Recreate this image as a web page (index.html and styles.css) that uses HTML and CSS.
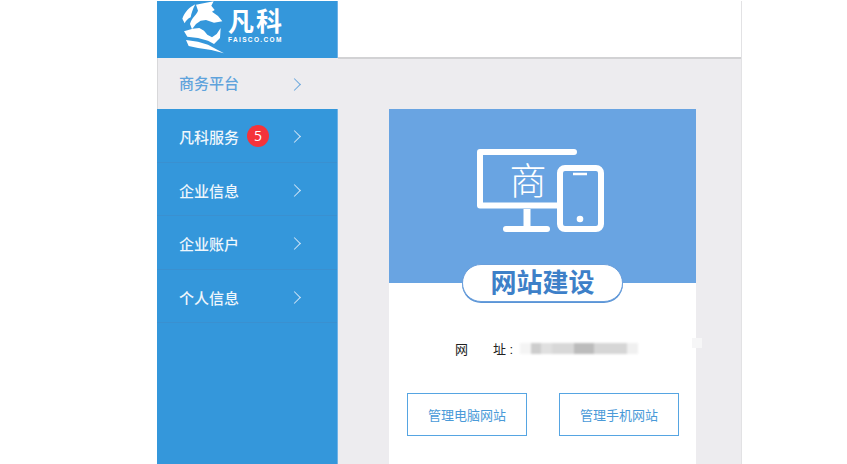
FILE: index.html
```html
<!DOCTYPE html>
<html lang="zh">
<head>
<meta charset="utf-8">
<title>商务平台</title>
<link rel="stylesheet" href="styles.css">
</head>
<body>
<div class="app">
  <aside class="sidebar">
    <div class="logo">
      <svg class="logo-mark" viewBox="0 3 150 171" width="50" height="57">
        <path fill="#fff" d="M13 56 C20 36 34 22 52 13 C44 28 40 40 38 52 C30 56 24 62 20 70 Z"/>
        <path fill="#fff" d="M54 14 L80 9 L107 4 L100 17 L110 30 L102 35 L120 48 L133 64 L108 68 L84 60 L68 62 L54 72 L42 88 L36 72 C40 54 56 44 60 32 Z"/>
        <path fill="#fff" d="M18 94 L44 86 L64 84 L78 92 L88 104 L102 112 L116 102 L128 84 L126 114 L108 132 L90 122 L60 114 L28 110 Z"/>
        <path fill="#fff" d="M24 120 L60 125 L90 134 L115 148 L138 160 L100 150 L60 144 L32 138 Z"/>
      </svg>
      <div class="logo-text">
        <div class="logo-cn">凡科</div>
        <div class="logo-en">FAISCO.COM</div>
      </div>
    </div>
    <nav class="menu">
      <a class="menu-item menu-item-active"><span class="menu-label">商务平台</span><span class="chevron"></span></a>
      <a class="menu-item"><span class="menu-label">凡科服务</span><span class="badge">5</span><span class="chevron"></span></a>
      <a class="menu-item"><span class="menu-label">企业信息</span><span class="chevron"></span></a>
      <a class="menu-item"><span class="menu-label">企业账户</span><span class="chevron"></span></a>
      <a class="menu-item"><span class="menu-label">个人信息</span><span class="chevron"></span></a>
    </nav>
  </aside>
  <div class="main">
    <header class="topbar"></header>
    <main class="content">
      <section class="card">
        <div class="card-hero">
          <svg class="device" viewBox="0 0 127 83" width="127" height="83">
            <path fill="none" stroke="#fff" stroke-width="6" stroke-linecap="round" stroke-linejoin="round" d="M97 3 H3 V56.500 H81"/>
            <path fill="none" stroke="#fff" stroke-width="7" d="M50 60 V78"/>
            <path fill="none" stroke="#fff" stroke-width="6" stroke-linecap="round" d="M29 80 H70"/>
            <rect x="83" y="19" width="41" height="61" rx="5" fill="none" stroke="#fff" stroke-width="6"/>
            <path fill="none" stroke="#fff" stroke-width="2.500" d="M96 25 H110"/>
            <circle cx="103" cy="70" r="3.300" fill="#fff"/>
            <text class="device-text" x="51" y="46" text-anchor="middle">商</text>
          </svg>
          <div class="pill">网站建设</div>
        </div>
        <div class="card-body">
          <div class="address">
            <span class="address-label">网</span><span class="address-label address-label-end">址 :</span>
            <span class="address-blur"></span>
          </div>
          <div class="actions">
            <a class="action">管理电脑网站</a>
            <a class="action">管理手机网站</a>
          </div>
        </div>
      </section>
      <span class="speck"></span>
    </main>
  </div>
</div>
</body>
</html>
```

FILE: styles.css
```css
* { box-sizing: border-box; }
html, body { margin: 0; height: 100%; background: #fff; overflow: hidden; }
body { font-family: "Liberation Sans", "Noto Sans CJK SC", sans-serif; }

.app {
  display: flex;
  width: 585px;
  height: 463px;
  margin: 1px 0 0 157px;
  border-right: 1px solid #e2e2e4;
}

.sidebar {
  flex: 0 0 181px;
  display: flex;
  flex-direction: column;
  background: #3497db;
  border-right: 1px solid #6fb2e6;
}

.logo {
  flex: 0 0 57px;
  display: flex;
  align-items: flex-start;
  padding: 0 0 0 21px;
  color: #fff;
}
.logo-mark { display: block; flex: none; }
.logo-text { margin: 7px 0 0 0; width: 56px; }
.logo-cn { font-size: 26px; line-height: 28px; font-weight: 700; letter-spacing: 2px; }
.logo-en { font-size: 6.500px; line-height: 8px; font-weight: 700; letter-spacing: 1.350px; margin-top: 0; }

.menu { display: flex; flex-direction: column; }
.menu-item {
  position: relative;
  display: flex;
  align-items: center;
  height: 53.500px;
  padding: 3px 0 0 22px;
  color: #eef6fc;
  font-size: 15px;
  font-weight: 500;
  border-bottom: 1px solid #3a90d0;
}
.menu-item-active {
  height: 51px;
  margin-right: -1px;
  color: #5fa3dc;
  background: #edecef;
  border-top: 0;
  border-left: 1px solid #d8d8da;
  border-bottom: 0;
  padding: 0 0 2px 21px;
}
.menu-label { width: 60px; }
.badge {
  width: 22px;
  height: 22px;
  border-radius: 50%;
  background: #f5333a;
  color: #fff;
  font-size: 14px;
  font-weight: 400;
  line-height: 22px;
  text-align: center;
  font-family: "Open Sans", sans-serif;
  margin: -1px 0 0 8px;
}
.chevron {
  position: absolute;
  left: 133px;
  top: 50%;
  width: 9px;
  height: 9px;
  margin-top: -3px;
  border-top: 1px solid #cfe4f6;
  border-right: 1px solid #cfe4f6;
  transform: rotate(45deg);
}
.menu-item-active .chevron { left: 132px; margin-top: -4px; border-color: #6ba8dd; }

.main { flex: 1; display: flex; flex-direction: column; min-width: 0; }
.topbar { flex: 0 0 58px; background: #fff; border-bottom: 2px solid #d2d2d4; }
.content {
  flex: 1;
  position: relative;
  background: #edecef;
  padding: 50px 0 0 51px;
  overflow: hidden;
}

.card { width: 307px; height: 400px; background: #fff; }
.card-hero {
  position: relative;
  height: 174px;
  background: #69a4e2;
  display: flex;
  justify-content: center;
  padding-top: 40px;
}
.device { display: block; margin-right: 5px; }
.device-text { font-family: "Noto Sans CJK SC", sans-serif; font-size: 37px; font-weight: 300; fill: #fff; }
.pill {
  position: absolute;
  left: 73px;
  top: 155px;
  width: 161px;
  height: 38px;
  border: 1px solid #6a9fdc;
  border-radius: 19px;
  background: #fff;
  box-shadow: 0 1px 0 #5b95d6;
  color: #3d80c8;
  font-size: 26px;
  font-weight: 700;
  line-height: 36px;
  text-align: center;
}

.card-body { padding: 56px 0 0 18px; }
.address {
  display: flex;
  align-items: center;
  height: 18px;
  padding-left: 48px;
  font-size: 13px;
  color: #222;
}
.address-label { width: 38px; font-weight: 400; }
.address-label-end { width: 28px; }
.address-blur {
  width: 118px;
  height: 11px;
  margin-left: -1px;
  filter: blur(1px);
  background: linear-gradient(90deg, #f4f4f4 0, #f4f4f4 9%, #cdcdcd 9%, #cdcdcd 18%, #e0e0e0 18%, #e0e0e0 27%, #d8d8d8 27%, #d8d8d8 46%, #bcbcbc 46%, #bcbcbc 63%, #d6d6d6 63%, #d6d6d6 91%, #f0f0f0 91%, #f0f0f0 100%);
}
.actions { display: flex; gap: 32px; margin-top: 36px; }
.action {
  width: 120px;
  height: 43px;
  display: flex;
  align-items: center;
  justify-content: center;
  border: 1px solid #56a5e2;
  color: #4a9ad8;
  font-size: 13px;
}
.speck {
  position: absolute;
  left: 354px;
  top: 279px;
  width: 10px;
  height: 10px;
  background: #f6f6f7;
}
```
